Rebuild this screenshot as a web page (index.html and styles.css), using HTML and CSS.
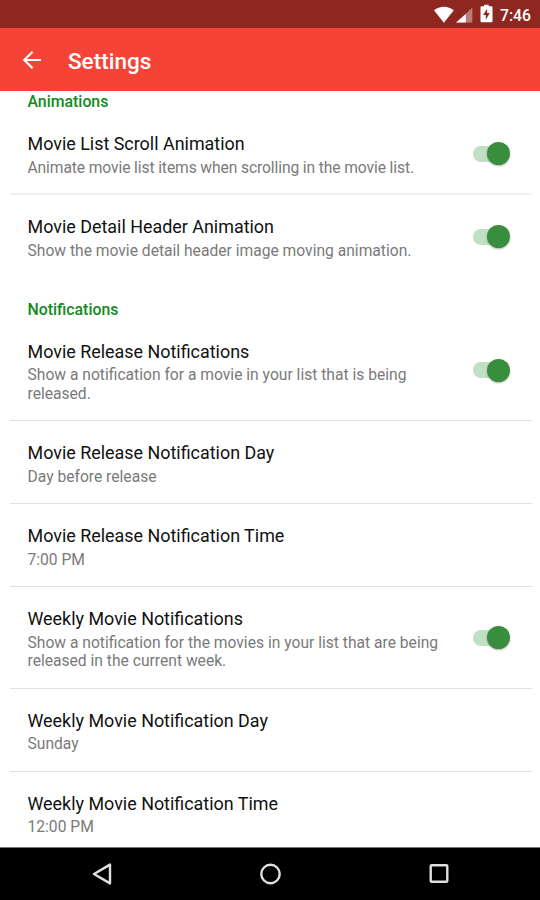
FILE: index.html
```
<!DOCTYPE html>
<html lang="en">
<head>
<meta charset="utf-8">
<title>Settings</title>
<link rel="stylesheet" href="styles.css">
</head>
<body>
<div class="screen">
  <div class="status">
    <svg width="68" height="22" viewBox="0 0 68 22">
      <path d="M0 6.3C5.8 1.4 14 1.4 19.8 6.3L9.9 18.8z" fill="#fff"/>
      <path d="M38.3 3.5v15H22.8z" fill="#fff" opacity=".4"/>
      <path d="M31.8 10V18.5H22z" fill="#fff"/>
      <path d="M50.1 2.2V.8h4.6v1.4h2.5c.8 0 1.3.5 1.3 1.3v13.4c0 .8-.5 1.3-1.3 1.3h-9.4c-.8 0-1.3-.5-1.3-1.3V3.5c0-.8.5-1.3 1.3-1.3z" fill="#fff"/>
      <path d="M53.1 4.8l-4 6.2h2.7v4.7l4-6.7h-2.7z" fill="#8f2721"/>
    </svg>
    <span class="clock">7:46</span>
  </div>
  <header class="appbar">
    <svg class="back" width="20" height="20" viewBox="0 0 20 20" fill="none" stroke="#fff" stroke-width="2.2"><path d="M19 10H2.5M10.6 1.7L2.3 10l8.3 8.3"/></svg>
    <h1>Settings</h1>
  </header>
  <main class="list">
    <h2 class="category first">Animations</h2>
    <section class="row soft">
      <div class="text"><div class="title">Movie List Scroll Animation</div><div class="summary tight">Animate movie list items when scrolling in the movie list.</div></div>
      <div class="switch"></div>
    </section>
    <section class="row last">
      <div class="text"><div class="title">Movie Detail Header Animation</div><div class="summary">Show the movie detail header image moving animation.</div></div>
      <div class="switch"></div>
    </section>
    <h2 class="category">Notifications</h2>
    <section class="row">
      <div class="text"><div class="title">Movie Release Notifications</div><div class="summary">Show a notification for a movie in your list that is being<br>released.</div></div>
      <div class="switch"></div>
    </section>
    <section class="row">
      <div class="text"><div class="title">Movie Release Notification Day</div><div class="summary">Day before release</div></div>
    </section>
    <section class="row">
      <div class="text"><div class="title">Movie Release Notification Time</div><div class="summary">7:00 PM</div></div>
    </section>
    <section class="row">
      <div class="text"><div class="title">Weekly Movie Notifications</div><div class="summary">Show a notification for the movies in your list that are being<br>released in the current week.</div></div>
      <div class="switch"></div>
    </section>
    <section class="row">
      <div class="text"><div class="title">Weekly Movie Notification Day</div><div class="summary">Sunday</div></div>
    </section>
    <section class="row last">
      <div class="text"><div class="title">Weekly Movie Notification Time</div><div class="summary">12:00 PM</div></div>
    </section>
  </main>
  <nav class="nav">
    <svg width="24" height="24" viewBox="0 0 24 24"><path d="M20 2.6v18.8L4 12z"/></svg>
    <svg width="24" height="24" viewBox="0 0 24 24"><circle cx="11.5" cy="12" r="9.2"/></svg>
    <svg width="24" height="24" viewBox="0 0 24 24"><rect x="3.7" y="3.2" width="16.6" height="16.6" rx="1"/></svg>
  </nav>
</div>
</body>
</html>
```
FILE: styles.css
```
body {
  margin: 0;
  font-family: Roboto, "Liberation Sans", sans-serif;
  background: #fff;
}
.screen {
  display: flex;
  flex-direction: column;
  width: 540px;
  height: 900px;
  overflow: hidden;
}
.status {
  display: flex;
  align-items: center;
  justify-content: flex-end;
  height: 28px;
  flex: none;
  padding: 2px 9px 0 0;
  box-sizing: border-box;
  background: #8f2721;
}
.clock {
  margin-left: -2px;
  color: #fff;
  font-size: 15.75px;
  font-weight: 500;
  line-height: 26px;
  padding-top: 2px;
}
.appbar {
  display: flex;
  align-items: center;
  height: 63.4px;
  flex: none;
  padding-left: 22px;
  background: #f64337;
}
.appbar h1 {
  margin: 2px 0 0 26px;
  color: #fff;
  font-size: 22.5px;
  font-weight: 500;
}
.list {
  flex: 1;
  min-height: 0;
  overflow: hidden;
  background: #fff;
}
.category {
  margin: 0;
  padding: 21.3px 27.5px 0;
  height: 20px;
  color: #128a1c;
  font-size: 15.85px;
  font-weight: 500;
  line-height: 20px;
}
.category.first {
  padding-top: 1px;
}
.row {
  display: flex;
  align-items: center;
  justify-content: space-between;
  box-sizing: border-box;
  margin: 0 8px 0 10px;
  padding: 20px 22.5px 17px 17.5px;
  border-bottom: 1px solid #e0e0e0;
}
.row.soft {
  padding-bottom: 16px;
  border-bottom: 2px solid #f1f1f1;
}
.row.last {
  border-bottom-color: transparent;
}
.title {
  margin-bottom: 2.6px;
  color: #111;
  font-size: 17.92px;
  line-height: 24px;
}
.summary {
  color: #7a7a7a;
  font-size: 15.63px;
  line-height: 18.4px;
  white-space: nowrap;
}
.summary.tight {
  letter-spacing: -0.11px;
}
.switch {
  position: relative;
  flex: none;
  width: 37px;
  height: 24px;
}
.switch::before {
  content: "";
  position: absolute;
  left: 0;
  top: 3px;
  width: 32px;
  height: 16px;
  border-radius: 8px;
  background: #c1dfc3;
}
.switch::after {
  content: "";
  position: absolute;
  right: 0;
  top: -0.5px;
  width: 23px;
  height: 23px;
  border-radius: 50%;
  background: #388e3c;
  box-shadow: 0 1px 2px rgba(0, 0, 0, 0.3);
}
.nav {
  display: flex;
  justify-content: space-between;
  align-items: center;
  box-sizing: border-box;
  height: 53px;
  flex: none;
  padding: 0 89px 0 90px;
  border-top: 1px solid #777;
  background: #000;
}
.nav svg {
  fill: none;
  stroke: #e0e0e0;
  stroke-width: 2.4;
  stroke-linejoin: round;
}
```
